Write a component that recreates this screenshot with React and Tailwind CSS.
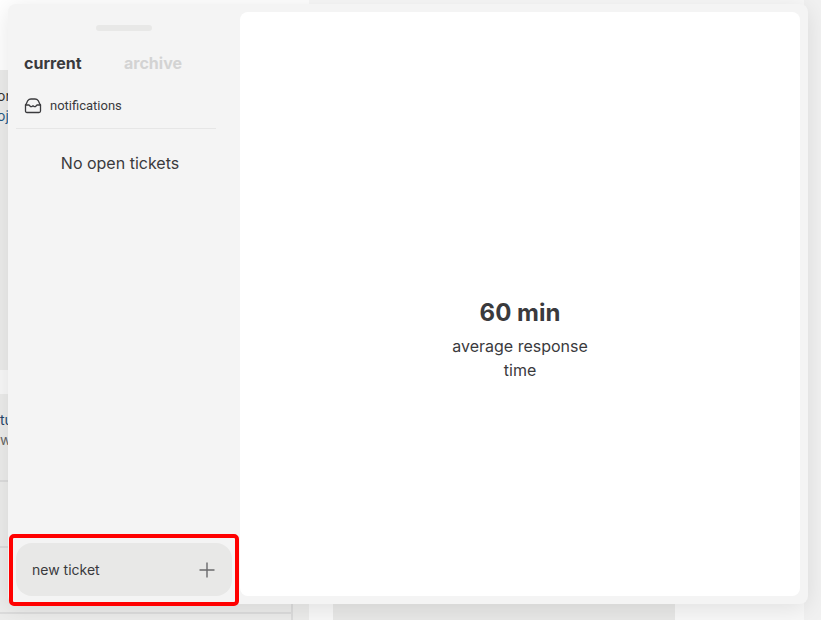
function InboxIcon() {
  return (
    <svg width="18" height="18" viewBox="0 0 18 18" fill="none" stroke="currentColor" strokeWidth="1.3" strokeLinejoin="round" strokeLinecap="round" aria-hidden="true">
      <path d="M1.500 8C2.600 6.800 2.800 5.200 3.800 3.700Q5 2 7 2h4q2 0 3.200 1.700C15.200 5.200 15.400 6.800 16.500 8v6q0 1.500-1.500 1.500H3Q1.500 15.500 1.500 14Z" />
      <path d="M1.500 8h3.500l1.700 1.700h1l.8-.7h1l.8.700h1L13 8h3.500" />
    </svg>
  );
}

function PlusIcon() {
  return (
    <svg width="16" height="16" viewBox="0 0 16 16" fill="none" stroke="#6a6a6c" strokeWidth="1.4" aria-hidden="true">
      <path d="M8 .5v15M.5 8h15" />
    </svg>
  );
}

function PageBehind() {
  return (
    <div className="flex h-full bg-[#f8f8f8] text-sm leading-5" aria-hidden="true">
      <div className="flex w-[309px] shrink-0 flex-col">
        <div className="h-[70px] shrink-0 bg-white" />
        <div className="h-[300px] shrink-0 bg-[#ececeb] pt-4">
          <div className="-ml-[3px] text-[#333]">or</div>
          <div className="-ml-[3px] text-[#245a86]">oje</div>
        </div>
        <div className="h-6 shrink-0" />
        <div className="flex-1 bg-[#ececeb] pt-4">
          <div className="text-[#24466b]">tu</div>
          <div className="text-[#666]">w</div>
          <div className="mt-[30px] mr-4 h-[66px] border-t-2 border-[#dcdcdc]" />
          <div className="mr-4 h-[68px] border-y-2 border-r-2 border-[#dcdcdc]" />
          <div className="mr-4 h-10 border-r-2 border-[#dcdcdc]" />
        </div>
      </div>
      <div className="w-6 shrink-0" />
      <div className="mt-auto h-[200px] w-[342px] shrink-0 bg-[#e8e8e7]" />
      <div className="flex-1" />
      <div className="w-[17px] shrink-0 bg-[#f1f1f1]" />
    </div>
  );
}

function Sidebar() {
  return (
    <aside className="flex w-[232px] shrink-0 flex-col px-2 pb-2">
      <div className="mt-[21px] h-[6px] w-14 self-center rounded-full bg-[#e8e8e7]" />
      <nav className="mt-5 flex gap-[42px] px-2 text-base leading-6 font-bold">
        <button type="button" className="w-[58px] text-left text-[#3a3a3d]">current</button>
        <button type="button" className="text-[#d3d3d3]">archive</button>
      </nav>
      <button type="button" className="mt-[9px] mr-4 flex h-[45px] items-center gap-2 border-b border-[#e6e6e6] px-2 font-[Roboto,sans-serif] text-[13px] text-[#3a3a3d]">
        <InboxIcon />
        notifications
      </button>
      <p className="mt-[22px] mr-2 text-center text-base leading-6">No open tickets</p>
      <div className="relative mt-auto">
        <button type="button" className="flex h-[53px] w-full items-center justify-between rounded-2xl bg-[#e8e8e7] px-4 text-sm text-[#3a3a3d]">
          new ticket
          <span className="pr-px"><PlusIcon /></span>
        </button>
        <div className="pointer-events-none absolute -inset-x-[7px] -top-[9px] -bottom-[10px] rounded-[5px] border-4 border-[#ff0000]" />
      </div>
    </aside>
  );
}

export default function App() {
  return (
    <div className="relative h-screen overflow-hidden font-[Inter,sans-serif] text-[#3a3a3d]">
      <PageBehind />
      <div className="absolute inset-0 flex pt-1 pr-[13px] pb-4 pl-2">
        <section role="dialog" aria-label="Support tickets" className="flex flex-1 rounded-lg bg-[#f4f4f4] shadow-[0_4px_24px_rgba(0,0,0,0.1)]">
          <Sidebar />
          <main className="my-2 mr-2 flex flex-1 flex-col items-center justify-center rounded-lg bg-white pt-[71px] text-center">
            <h1 className="text-2xl leading-8 font-bold">60 min</h1>
            <p className="mt-[5px] w-40 text-base leading-6">average response time</p>
          </main>
        </section>
      </div>
    </div>
  );
}
